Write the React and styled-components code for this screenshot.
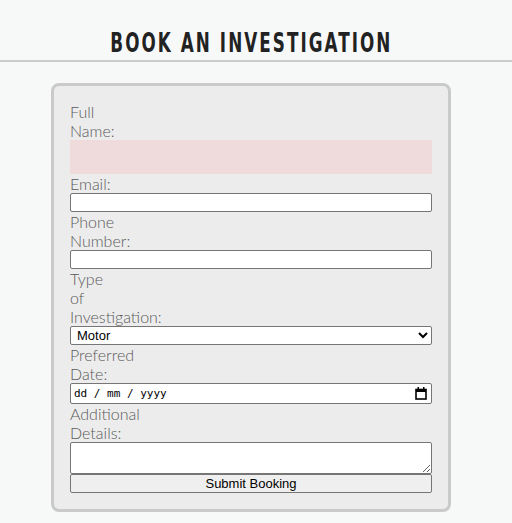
import React from 'react';
import styled, { createGlobalStyle } from 'styled-components';

const GlobalStyle = createGlobalStyle`
  html, body {
    margin: 0;
    padding: 0;
    background: #f7f8f8;
  }
  body {
    font-family: 'Lato', 'Liberation Sans', sans-serif;
  }
`;

const Header = styled.header`
  border-bottom: 2px solid #cccccc;
  height: 60px;
  display: flex;
  align-items: flex-end;
  justify-content: center;
  padding-right: 10px;
`;

const Title = styled.h1`
  margin: 0 0 2px;
  font-family: 'DejaVu Sans Condensed', sans-serif;
  font-weight: 700;
  font-size: 27px;
  letter-spacing: 3px;
  color: #222222;
  text-transform: uppercase;
  transform: scaleX(0.69);
`;

const Main = styled.main`
  display: flex;
  justify-content: center;
  padding: 21px 10px 11px 0;
`;

const Card = styled.form`
  width: 400px;
  box-sizing: border-box;
  background: #ececec;
  border: 3px solid #cacaca;
  border-radius: 8px;
  padding: 16px;
  display: flex;
  flex-direction: column;
`;

const Label = styled.label`
  display: block;
  width: 0;
  font-size: 16px;
  font-weight: 300;
  line-height: 19px;
  color: #5a5a5a;
`;

const Field = styled.input`
  display: block;
  box-sizing: border-box;
  width: 100%;
  margin: 0;
  height: 19px;
  font-family: 'Liberation Sans', Arial, sans-serif;
  font-size: 13px;
  background: #ffffff;
  border: 1px solid #767676;
  border-radius: 2px;
  padding: 1px 2px;
`;

const NameField = styled(Field)`
  height: 34px;
  border: none;
  border-radius: 0;
  background: #efdadc;
`;

const DateWrap = styled.div`
  position: relative;
`;

const DateField = styled(Field)`
  font-family: 'DejaVu Sans Mono', 'Liberation Mono', monospace;
  font-size: 11px;
  height: 21px;
  padding: 1px 3px;
  &::placeholder {
    color: #000000;
    opacity: 1;
  }
`;

const CalendarIcon = styled.svg`
  position: absolute;
  right: 5px;
  top: 4px;
  width: 12px;
  height: 13px;
  pointer-events: none;
`;

const Select = styled.select`
  display: block;
  box-sizing: border-box;
  width: 100%;
  margin: 0;
  height: 19px;
  font-family: 'Liberation Sans', Arial, sans-serif;
  font-size: 13px;
  color: #000;
  background: #ffffff;
  border: 1px solid #767676;
  border-radius: 2px;
  padding: 0 2px;
`;

const TextArea = styled.textarea`
  display: block;
  box-sizing: border-box;
  width: 100%;
  margin: 0;
  height: 32px;
  background: #ffffff;
  border: 1px solid #767676;
  border-radius: 2px;
`;

const Submit = styled.button`
  display: block;
  box-sizing: border-box;
  width: 100%;
  margin: 0;
  height: 19px;
  padding: 0;
  font-family: 'Liberation Sans', Arial, sans-serif;
  font-size: 13px;
  color: #000;
  background: #efefef;
  border: 1px solid #767676;
  border-radius: 2px;
`;

export default function App() {
  return (
    <>
      <GlobalStyle />
      <Header>
        <Title>Book an Investigation</Title>
      </Header>
      <Main>
        <Card onSubmit={(e) => e.preventDefault()}>
          <Label htmlFor="name">Full Name:</Label>
          <NameField id="name" type="text" />
          <Label htmlFor="email">Email:</Label>
          <Field id="email" type="email" />
          <Label htmlFor="phone">Phone Number:</Label>
          <Field id="phone" type="tel" />
          <Label htmlFor="type">Type of Investigation:</Label>
          <Select id="type" defaultValue="Motor">
            <option>Motor</option>
            <option>Property</option>
            <option>Liability</option>
          </Select>
          <Label htmlFor="date">Preferred Date:</Label>
          <DateWrap>
            <DateField id="date" type="text" placeholder="dd / mm / yyyy" />
            <CalendarIcon viewBox="0 0 12 13">
              <rect x="1" y="2.5" width="10" height="9.5" fill="none" stroke="#000" strokeWidth="1.6" />
              <rect x="1" y="2" width="10" height="3" fill="#000" />
              <rect x="2.5" y="0" width="1.5" height="3" fill="#000" />
              <rect x="8" y="0" width="1.5" height="3" fill="#000" />
            </CalendarIcon>
          </DateWrap>
          <Label htmlFor="details">Additional Details:</Label>
          <TextArea id="details" />
          <Submit type="submit">Submit Booking</Submit>
        </Card>
      </Main>
    </>
  );
}
